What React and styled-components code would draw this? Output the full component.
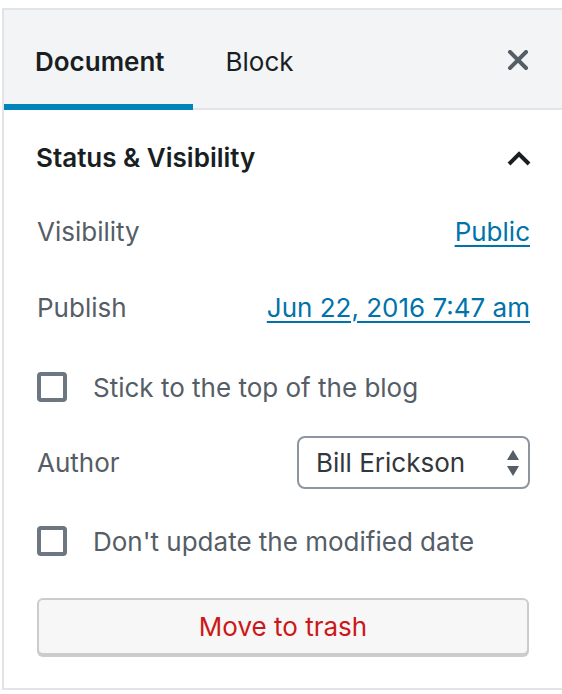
import React from "react";
import styled, { createGlobalStyle } from "styled-components";

const Global = createGlobalStyle`
  html, body { margin: 0; padding: 0; background: #fff; }
  body { font-family: Inter, "Noto Sans", Roboto, sans-serif; -webkit-font-smoothing: antialiased; }
  * { box-sizing: border-box; }
`;

const Sidebar = styled.div`
  margin: 8px 0 0 2px;
  width: 560px;
  border-top: 2px solid #e2e4e7;
  border-left: 2px solid #e2e4e7;
  border-bottom: 2px solid #e2e4e7;
  background: #fff;
`;

const TabBar = styled.div`
  display: flex;
  align-items: stretch;
  height: 100px;
  background: #f3f4f5;
  box-shadow: inset 0 -2px 0 #e2e4e7;
`;

const Tab = styled.button`
  border: 0;
  background: transparent;
  margin: 0;
  padding: 2px ${p => (p.$active ? 28 : 32)}px 0 ${p => (p.$active ? 31 : 33)}px;
  font-family: inherit;
  font-size: 26px;
  font-weight: ${p => (p.$active ? 600 : 400)};
  color: #191e23;
  box-shadow: ${p => (p.$active ? "inset 0 -6px 0 #0085ba" : "none")};
`;

const Spacer = styled.div`
  flex: 1;
`;

const CloseButton = styled.button`
  border: 0;
  background: transparent;
  width: 50px;
  margin-right: 19px;
  display: flex;
  align-items: center;
  justify-content: center;
  padding: 0;
  color: #555d66;
`;

const Body = styled.div`
  padding: 0 32px 33px 32px;
`;

const Heading = styled.div`
  height: 95px;
  display: flex;
  align-items: center;
  justify-content: space-between;
  font-size: 26px;
  font-weight: 600;
  color: #191e23;
  padding-left: 0;
`;

const Row = styled.div`
  display: flex;
  align-items: center;
  justify-content: space-between;
  height: ${p => p.$h || 52}px;
  margin-top: ${p => p.$mt || 0}px;
  font-size: 26px;
  color: #555d66;
  padding-left: 1px;
`;

const Link = styled.a`
  color: #0073aa;
  text-decoration: underline;
  text-decoration-thickness: 2px;
  text-underline-offset: 4px;
  cursor: pointer;
`;

const CheckRow = styled.label`
  display: flex;
  align-items: center;
  gap: 26px;
  height: 52px;
  margin-top: ${p => p.$mt || 0}px;
  font-size: 26px;
  color: #555d66;
  padding-left: 1px;
`;

const Box = styled.span`
  width: 30px;
  height: 30px;
  border: 4px solid #6c7781;
  border-radius: 4px;
  flex: none;
`;

const SelectBox = styled.div`
  position: relative;
  width: 233px;
  height: 53px;
  border: 2px solid #8d96a0;
  border-radius: 8px;
  display: flex;
  align-items: center;
  padding-left: 17px;
  color: #32373c;
  font-size: 26px;
`;

const Arrows = styled.span`
  position: absolute;
  right: 8px;
  top: 10px;
  display: flex;
`;

const TrashButton = styled.button`
  width: 492px;
  height: 57px;
  margin-top: ${p => p.$mt || 0}px;
  margin-left: 1px;
  border: 2px solid #cccccc;
  border-radius: 6px;
  background: #f7f7f7;
  box-shadow: 0 2px 0 #cccccc;
  font-family: inherit;
  font-size: 26px;
  color: #cc1818;
  display: block;
`;

export default function App() {
  return (
    <>
      <Global />
      <Sidebar>
        <TabBar>
          <Tab $active>Document</Tab>
          <Tab>Block</Tab>
          <Spacer />
          <CloseButton aria-label="Close">
            <svg width="20" height="20" viewBox="0 0 20 20">
              <path d="M2 2 L18 18 M18 2 L2 18" stroke="#555d66" strokeWidth="4" strokeLinecap="square" fill="none" />
            </svg>
          </CloseButton>
        </TabBar>
        <Body>
          <Heading>
            <span>Status &amp; Visibility</span>
            <svg width="26" height="16" viewBox="0 0 26 16" style={{ marginRight: -2 }}>
              <polyline points="3,14 13,4 23,14" stroke="#191e23" strokeWidth="4" fill="none" />
            </svg>
          </Heading>
          <Row>
            <span>Visibility</span>
            <Link>Public</Link>
          </Row>
          <Row $mt={24}>
            <span>Publish</span>
            <Link>Jun 22, 2016 7:47 am</Link>
          </Row>
          <CheckRow $mt={28}>
            <Box />
            <span>Stick to the top of the blog</span>
          </CheckRow>
          <Row $mt={23} $h={53}>
            <span>Author</span>
            <SelectBox>
              Bill Erickson
              <Arrows>
                <svg width="14" height="30" viewBox="0 0 14 30">
                  <polygon points="7,2 13,12 1,12" fill="#555d66" />
                  <polygon points="1,18 13,18 7,28" fill="#555d66" />
                </svg>
              </Arrows>
            </SelectBox>
          </Row>
          <CheckRow $mt={26}>
            <Box />
            <span>Don't update the modified date</span>
          </CheckRow>
          <TrashButton $mt={31}>Move to trash</TrashButton>
        </Body>
      </Sidebar>
    </>
  );
}
